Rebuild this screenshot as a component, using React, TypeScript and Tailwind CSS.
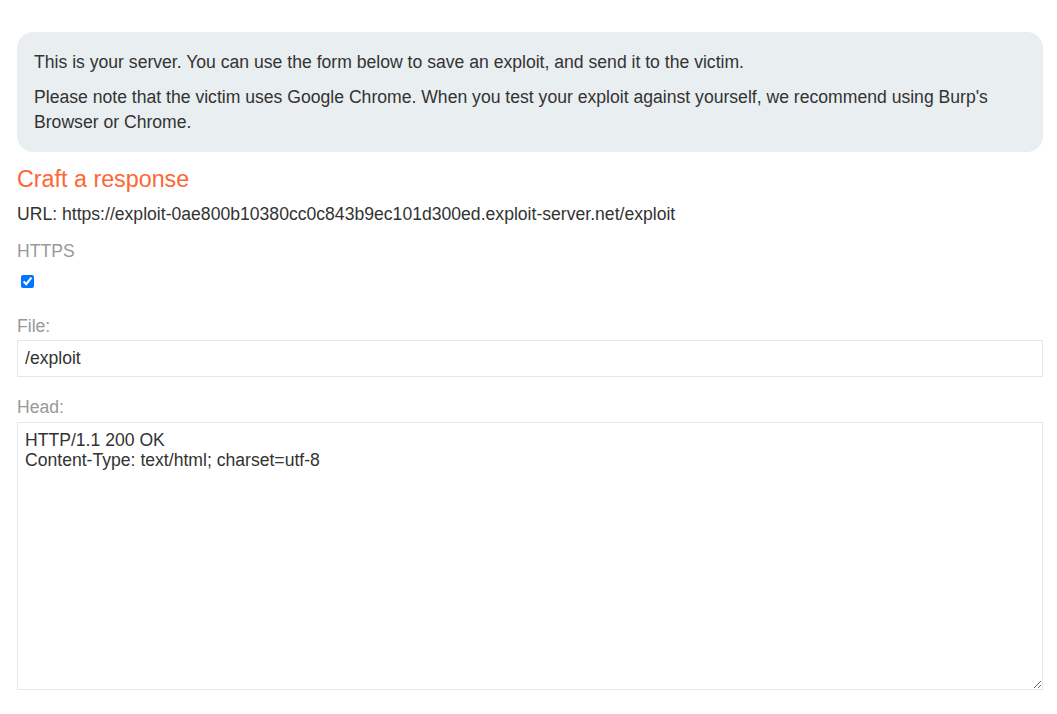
import React from "react";

export default function App() {
  return (
    <div className="min-h-screen bg-white pl-[17px] pr-[14px] pt-[32px] text-[#333332]">
      <div className="font-['Liberation_Sans',Arial,sans-serif]">
        <div className="rounded-[16px] bg-[#e9eef1] px-[17px] pt-[18px] pb-[17px] text-[17.6px] leading-[25px]">
          <p className="mb-[10px]">This is your server. You can use the form below to save an exploit, and send it to the victim.</p>
          <p>Please note that the victim uses Google Chrome. When you test your exploit against yourself, we recommend using Burp's Browser or Chrome.</p>
        </div>
        <h3 className="mt-[13px] text-[23.3px] leading-[28px] text-[#ff6633]">Craft a response</h3>
        <div className="mt-[9px] text-[17.6px] leading-[25px]">URL: https://exploit-0ae800b10380cc0c843b9ec101d300ed.exploit-server.net/exploit</div>
        <div className="mt-[12px] text-[17.6px] leading-[25px] text-[#999]">HTTPS</div>
        <div className="mt-[11px] flex">
          <input type="checkbox" defaultChecked className="ml-[4px] block h-[13px] w-[13px] m-0" />
        </div>
        <div className="mt-[26px] text-[17.6px] leading-[25px] text-[#999]">File:</div>
        <input
          type="text"
          defaultValue="/exploit"
          className="mt-[1px] block h-[37px] w-full border border-[#e6e6e6] px-[7px] text-[17.6px] text-[#333332] outline-none"
        />
        <div className="mt-[18px] text-[17.6px] leading-[25px] text-[#999]">Head:</div>
        <textarea
          defaultValue={"HTTP/1.1 200 OK\nContent-Type: text/html; charset=utf-8"}
          className="mt-[2px] block h-[268px] w-full border border-[#e6e6e6] px-[7px] py-[7px] text-[17.6px] leading-[20px] text-[#333332] outline-none"
        />
      </div>
    </div>
  );
}
